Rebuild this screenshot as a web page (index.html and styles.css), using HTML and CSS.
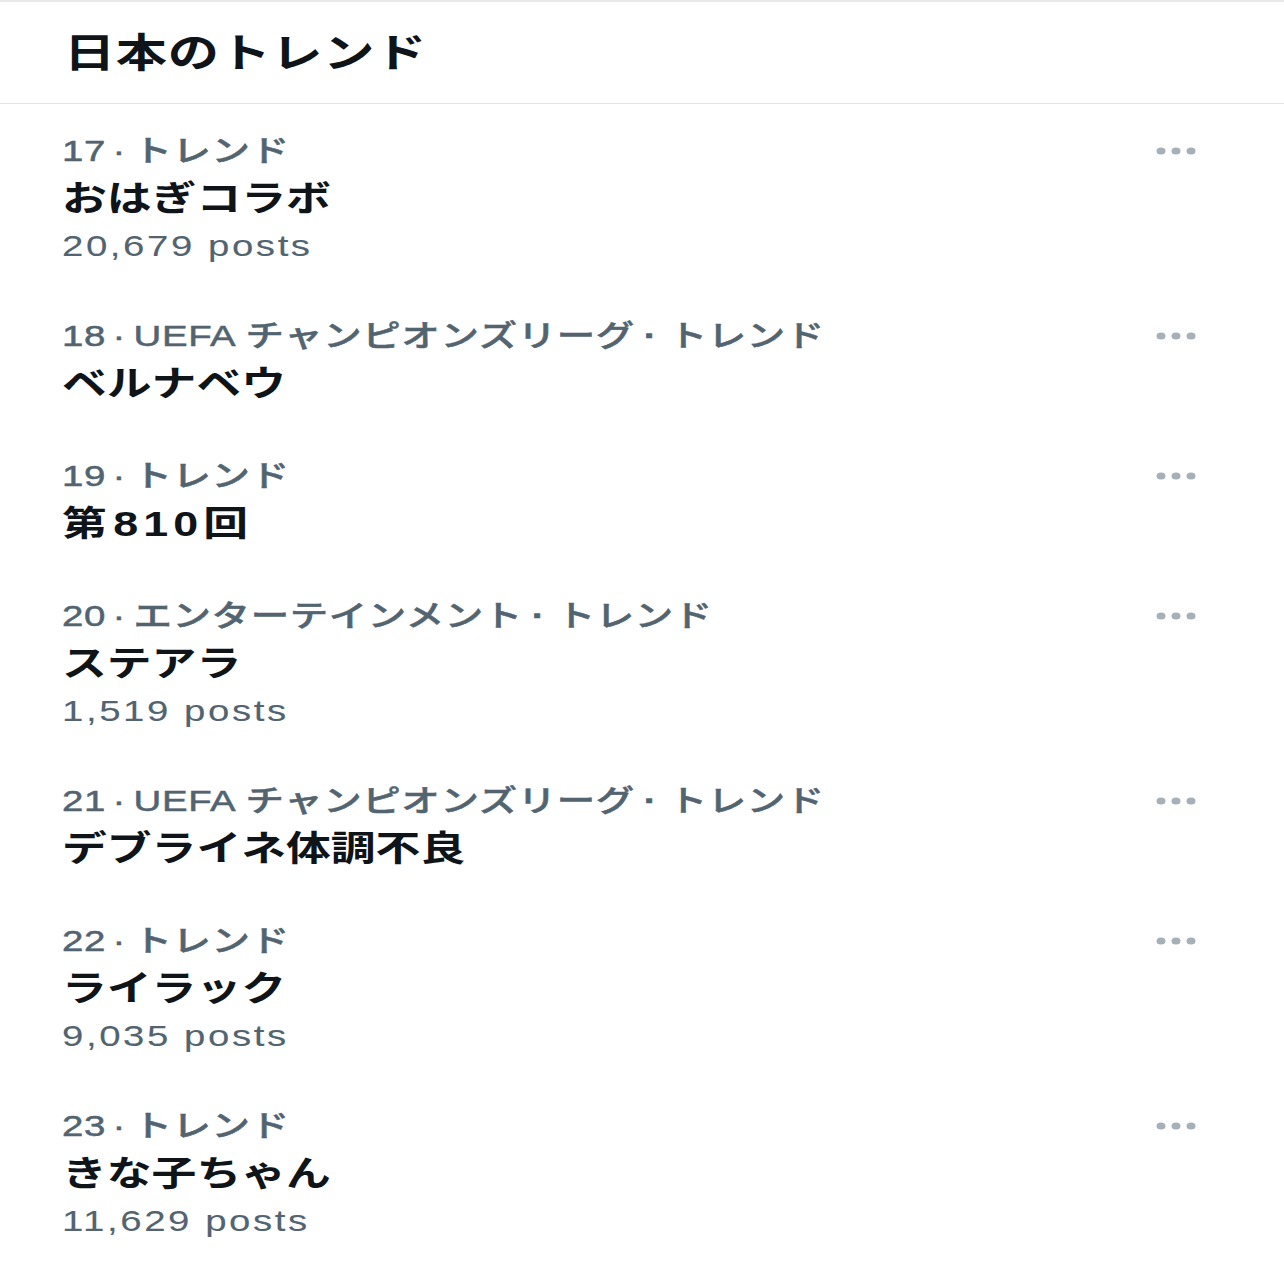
FILE: index.html
```html
<!DOCTYPE html>
<html lang="ja">
<head>
<meta charset="utf-8">
<link rel="stylesheet" href="styles.css">
</head>
<body>
<div class="panel">
  <div class="header"><h1 class="title"><span class="wide">日本のトレンド</span></h1></div>
  <ul class="list">
    <li class="row">
      <div class="content">
        <div class="meta"><span class="wide">17<span class="sep">·</span>トレンド</span></div>
        <div class="name"><span class="wide">おはぎコラボ</span></div>
        <div class="posts"><span class="wide">20,679 posts</span></div>
      </div>
      <div class="more"><svg width="44" height="10" viewBox="0 0 44 10"><ellipse cx="5" cy="5" rx="4.5" ry="3.6"/><ellipse cx="20" cy="5" rx="4.5" ry="3.6"/><ellipse cx="35" cy="5" rx="4.5" ry="3.6"/></svg></div>
    </li>
    <li class="row">
      <div class="content">
        <div class="meta"><span class="wide">18<span class="sep">·</span>UEFA チャンピオンズリーグ<span class="sep sep-wide">·</span>トレンド</span></div>
        <div class="name"><span class="wide">ベルナベウ</span></div>
      </div>
      <div class="more"><svg width="44" height="10" viewBox="0 0 44 10"><ellipse cx="5" cy="5" rx="4.5" ry="3.6"/><ellipse cx="20" cy="5" rx="4.5" ry="3.6"/><ellipse cx="35" cy="5" rx="4.5" ry="3.6"/></svg></div>
    </li>
    <li class="row">
      <div class="content">
        <div class="meta"><span class="wide">19<span class="sep">·</span>トレンド</span></div>
        <div class="name"><span class="wide">第<span class="num">810</span>回</span></div>
      </div>
      <div class="more"><svg width="44" height="10" viewBox="0 0 44 10"><ellipse cx="5" cy="5" rx="4.5" ry="3.6"/><ellipse cx="20" cy="5" rx="4.5" ry="3.6"/><ellipse cx="35" cy="5" rx="4.5" ry="3.6"/></svg></div>
    </li>
    <li class="row">
      <div class="content">
        <div class="meta"><span class="wide">20<span class="sep">·</span>エンターテインメント<span class="sep sep-wide">·</span>トレンド</span></div>
        <div class="name"><span class="wide">ステアラ</span></div>
        <div class="posts"><span class="wide">1,519 posts</span></div>
      </div>
      <div class="more"><svg width="44" height="10" viewBox="0 0 44 10"><ellipse cx="5" cy="5" rx="4.5" ry="3.6"/><ellipse cx="20" cy="5" rx="4.5" ry="3.6"/><ellipse cx="35" cy="5" rx="4.5" ry="3.6"/></svg></div>
    </li>
    <li class="row">
      <div class="content">
        <div class="meta"><span class="wide">21<span class="sep">·</span>UEFA チャンピオンズリーグ<span class="sep sep-wide">·</span>トレンド</span></div>
        <div class="name"><span class="wide">デブライネ体調不良</span></div>
      </div>
      <div class="more"><svg width="44" height="10" viewBox="0 0 44 10"><ellipse cx="5" cy="5" rx="4.5" ry="3.6"/><ellipse cx="20" cy="5" rx="4.5" ry="3.6"/><ellipse cx="35" cy="5" rx="4.5" ry="3.6"/></svg></div>
    </li>
    <li class="row">
      <div class="content">
        <div class="meta"><span class="wide">22<span class="sep">·</span>トレンド</span></div>
        <div class="name"><span class="wide">ライラック</span></div>
        <div class="posts"><span class="wide">9,035 posts</span></div>
      </div>
      <div class="more"><svg width="44" height="10" viewBox="0 0 44 10"><ellipse cx="5" cy="5" rx="4.5" ry="3.6"/><ellipse cx="20" cy="5" rx="4.5" ry="3.6"/><ellipse cx="35" cy="5" rx="4.5" ry="3.6"/></svg></div>
    </li>
    <li class="row">
      <div class="content">
        <div class="meta"><span class="wide">23<span class="sep">·</span>トレンド</span></div>
        <div class="name"><span class="wide">きな子ちゃん</span></div>
        <div class="posts"><span class="wide">11,629 posts</span></div>
      </div>
      <div class="more"><svg width="44" height="10" viewBox="0 0 44 10"><ellipse cx="5" cy="5" rx="4.5" ry="3.6"/><ellipse cx="20" cy="5" rx="4.5" ry="3.6"/><ellipse cx="35" cy="5" rx="4.5" ry="3.6"/></svg></div>
    </li>
  </ul>
</div>
</body>
</html>
```
FILE: styles.css
```css
html, body {
  margin: 0;
  padding: 0;
  background: #ffffff;
}
body {
  font-family: "Liberation Sans", "Noto Sans CJK JP", sans-serif;
  color: #0f1419;
}
.panel {
  width: 1284px;
  border-top: 2px solid #e7e9eb;
}
.wide {
  display: inline-block;
  transform-origin: left center;
  transform: scaleX(1.28);
  white-space: nowrap;
}
.header {
  height: 95px;
  padding-bottom: 6px;
  display: flex;
  align-items: center;
  padding-left: 64px;
  border-bottom: 1px solid #e1e4e7;
}
.title {
  margin: 0;
  font-family: "Noto Sans CJK JP", sans-serif;
  font-size: 40px;
  font-weight: 700;
  letter-spacing: 0.5px;
  line-height: 1;
  color: #0f1419;
}
.list {
  list-style: none;
  margin: 0;
  padding: 0;
}
.row {
  display: flex;
  justify-content: space-between;
  padding: 23px 84px 21px 62px;
}
.content {
  display: flex;
  flex-direction: column;
}
.meta {
  font-size: 30px;
  line-height: 47px;
  height: 47px;
  letter-spacing: 0.5px;
  font-weight: 500;
  color: #536471;
  -webkit-text-stroke: 0.5px #536471;
}
.sep {
  margin: 0 6px 0 5px;
  font-weight: 400;
}
.sep-wide {
  margin: 0 9px 0 7px;
  font-weight: 700;
}
.name {
  font-family: "Liberation Sans", "Noto Sans CJK JP", sans-serif;
  font-size: 35px;
  line-height: 49px;
  height: 49px;
  font-weight: 700;
  letter-spacing: 0;
  color: #0f1419;
}
.num {
  letter-spacing: 4px;
  margin-left: 5px;
}
.posts {
  font-size: 30px;
  line-height: 45px;
  height: 45px;
  letter-spacing: 2px;
  color: #536471;
  -webkit-text-stroke: 0.1px #536471;
}
.more {
  height: 47px;
  display: flex;
  align-items: center;
}
.more svg {
  display: block;
  fill: #a6b0b8;
}
```
